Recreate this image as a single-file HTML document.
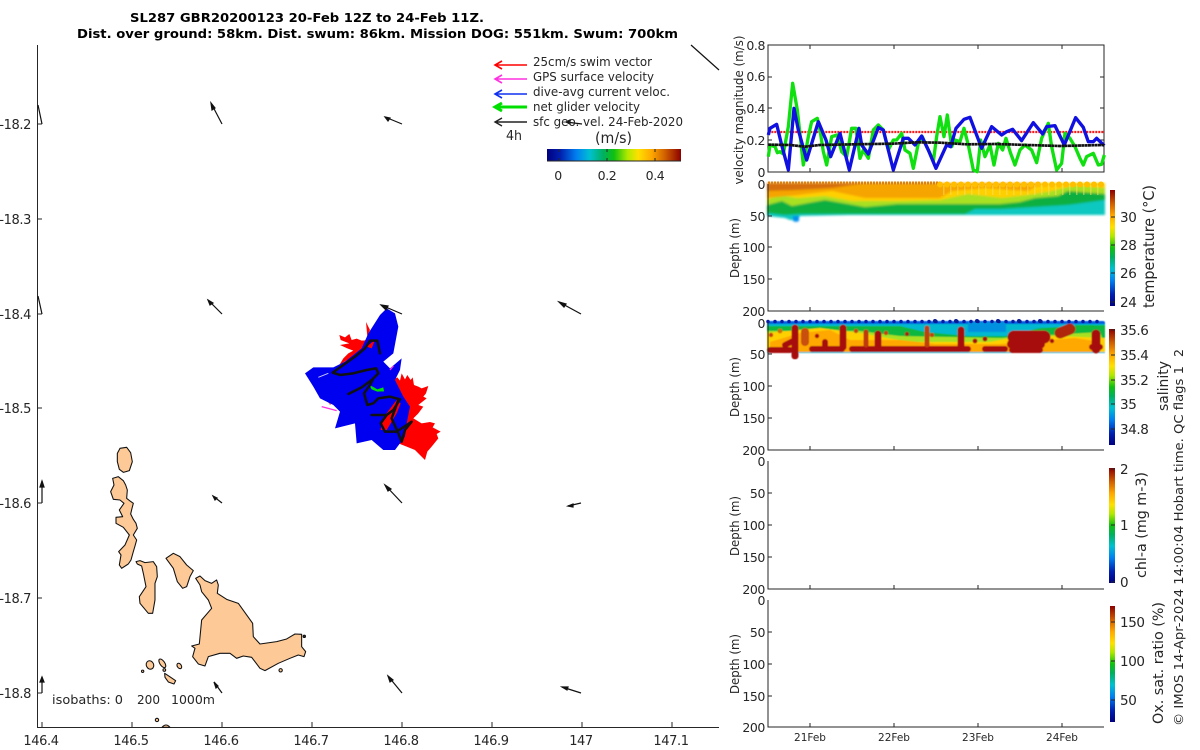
<!DOCTYPE html>
<html><head><meta charset="utf-8"><style>
html,body{margin:0;padding:0;background:#fff;width:1200px;height:750px;overflow:hidden}
svg{display:block;font-family:"DejaVu Sans","Liberation Sans",sans-serif}
text{fill:#262626}
.t{letter-spacing:-.4px}
</style></head><body>
<svg width="1200" height="750" viewBox="0 0 1200 750" xmlns="http://www.w3.org/2000/svg">
<defs>
<linearGradient id="jetV" x1="0" y1="1" x2="0" y2="0">
<stop offset="0" stop-color="#00007f"/><stop offset=".1" stop-color="#0020b0"/><stop offset=".22" stop-color="#0080f0"/><stop offset=".32" stop-color="#00c0d0"/><stop offset=".42" stop-color="#00b060"/><stop offset=".5" stop-color="#10c010"/><stop offset=".6" stop-color="#b0e800"/><stop offset=".68" stop-color="#ffe000"/><stop offset=".78" stop-color="#ffa800"/><stop offset=".88" stop-color="#d06000"/><stop offset="1" stop-color="#8b0000"/>
</linearGradient>
<linearGradient id="jetH" x1="0" y1="0" x2="1" y2="0">
<stop offset="0" stop-color="#00007f"/><stop offset=".1" stop-color="#0020b0"/><stop offset=".22" stop-color="#0080f0"/><stop offset=".32" stop-color="#00c0d0"/><stop offset=".42" stop-color="#00b060"/><stop offset=".5" stop-color="#10c010"/><stop offset=".6" stop-color="#b0e800"/><stop offset=".68" stop-color="#ffe000"/><stop offset=".78" stop-color="#ffa800"/><stop offset=".88" stop-color="#d06000"/><stop offset="1" stop-color="#8b0000"/>
</linearGradient>
<filter id="b1" x="-2%" y="-10%" width="104%" height="120%"><feGaussianBlur stdDeviation="1"/></filter>
<filter id="b2" x="-2%" y="-10%" width="104%" height="120%"><feGaussianBlur stdDeviation=".5"/></filter>
</defs>

<!-- Title -->
<text x="130" y="22" font-size="12.5" font-weight="bold" textLength="354" lengthAdjust="spacingAndGlyphs" style="fill:#000">SL287 GBR20200123 20-Feb 12Z to 24-Feb 11Z.</text>
<text x="77" y="38" font-size="12.5" font-weight="bold" textLength="601" lengthAdjust="spacingAndGlyphs" style="fill:#000">Dist. over ground: 58km. Dist. swum: 86km. Mission DOG: 551km. Swum: 700km</text>

<!-- Map axes -->
<path d="M37.5 45V727.5H719" fill="none" stroke="#262626" stroke-width="1"/>
<path d="M42 727V722M132 727V722M222 727V722M312 727V722M402 727V722M492 727V722M582 727V722M672 727V722M38 124H42M38 219H42M38 314H42M38 408H42M38 503H42M38 598H42M38 693H42" stroke="#262626" stroke-width="1" fill="none"/>
<g font-size="13" text-anchor="middle" class="t">
<text x="41" y="745">146.4</text><text x="131" y="745">146.5</text><text x="221" y="745">146.6</text><text x="311" y="745">146.7</text><text x="401" y="745">146.8</text><text x="491" y="745">146.9</text><text x="581" y="745">147</text><text x="671" y="745">147.1</text>
</g>
<g font-size="13" text-anchor="end" class="t">
<text x="31" y="129">-18.2</text><text x="31" y="224">-18.3</text><text x="31" y="319">-18.4</text><text x="31" y="413">-18.5</text><text x="31" y="508">-18.6</text><text x="31" y="603">-18.7</text><text x="31" y="698">-18.8</text>
</g>

<!-- Islands -->
<g transform="translate(30,440) scale(.3333)" fill="#fdc997" stroke="#111" stroke-width="3.2" stroke-linejoin="round">
<path d="M262 40L270 25L290 22L302 38L307 65L298 92L280 97L268 88L262 65Z"/>
<path d="M248 115L265 110L280 122L287 135L292 150L290 175L300 183L310 190L306 205L302 222L310 238L318 250L322 265L310 285L320 300L315 318L310 335L303 360L295 372L275 385L268 375L273 345L266 335L285 315L298 285L280 262L258 250L258 232L278 230L268 210L282 190L270 180L250 178L242 155L252 135Z"/>
<path d="M318 365L330 362L345 368L370 365L380 380L382 410L375 430L375 480L368 520L355 520L330 490L328 470L348 440L340 400L335 378L322 372Z"/>
<path d="M408 355L430 340L450 350L470 375L490 392L480 410L470 440L458 445L442 425L430 385Z"/>
<path d="M497 415L510 408L525 422L545 430L560 420L565 435L562 460L590 478L625 490L650 525L668 550L670 590L690 612L740 605L770 597L795 582L815 583L815 620L827 635L822 650L805 645L780 655L745 670L705 692L690 685L665 652L640 648L620 655L600 640L570 640L535 650L525 678L505 672L488 650L495 625L485 618L508 612L515 540L545 505L535 480L515 455L510 435Z"/>
<ellipse cx="360" cy="675" rx="11" ry="13" transform="rotate(-25 360 675)"/>
<ellipse cx="397" cy="670" rx="7" ry="15" transform="rotate(-35 397 670)"/>
<ellipse cx="448" cy="678" rx="6" ry="9" transform="rotate(-35 448 678)"/>
<path d="M404 700L416 708L437 722L432 732L415 726L405 712Z"/>
<circle cx="403" cy="690" r="4"/><circle cx="338" cy="694" r="3.5"/><circle cx="752" cy="691" r="5"/><circle cx="381" cy="840" r="5"/><circle cx="823" cy="589" r="3.5" fill="#333"/>
<path d="M396 862Q408 848 420 862Z"/>
</g>
<g font-size="12.5"><text x="52" y="704" textLength="71" lengthAdjust="spacingAndGlyphs">isobaths: 0</text><text x="137" y="704" textLength="23" lengthAdjust="spacingAndGlyphs">200</text><text x="171" y="704" textLength="44" lengthAdjust="spacingAndGlyphs">1000m</text></g>

<!-- Glider swath -->
<g transform="translate(290,290) scale(.3333)">
<g fill="#ff0000">
<path d="M148 135L165 142L178 132L185 150L200 146L215 152L240 150L255 150L240 175L200 195L180 205L148 225L160 205L175 190L190 182L172 175L150 165L178 160L152 150Z"/>
<path d="M228 96L240 120L232 140Z"/>
<path d="M312 268L322 262L330 272L335 250L345 268L352 255L362 270L368 262L372 285L385 290L395 295L415 288L408 310L400 320L410 325L385 345L400 350L385 370L370 385L395 400L420 396L435 400L428 412L452 425L440 432L445 445L425 470L412 485L405 510L390 495L375 480L350 470L325 460L340 400L330 330Z"/>
<path d="M110 330L130 318L135 335L120 345Z" opacity=".6"/>
</g>
<path fill="#0000f0" d="M290 55L315 70L325 110L310 190L280 215L300 235L335 205L330 240L315 270L340 320L360 350L350 400L345 440L315 480L280 480L245 450L200 460L195 400L135 415L150 365L130 345L90 325L70 290L45 250L70 232L130 232L165 215L215 175L235 130L270 75Z"/>
<path d="M85 262L115 250" stroke="#c8c8ff" stroke-width="3" fill="none"/>
<path fill="#ff0000" d="M320 330L332 340L320 370L290 420L272 420L278 385ZM230 170L255 150L245 175Z"/>
<path d="M95 350L140 362M300 240L310 228" stroke="#ff30e0" stroke-width="4" fill="none"/>
<path d="M238 285L252 292L262 298L280 292L282 304L262 305L245 298Z" fill="#00e000"/>
<path fill="none" stroke="#111" stroke-width="7.5" stroke-linejoin="round" stroke-linecap="round" d="M270 190L262 152L240 152L225 175L195 200L160 225L128 248L150 255L190 250L230 240L258 235L265 250L250 265L240 285L222 310L232 345L250 340L265 325L300 320L330 328L310 360L290 375L245 375M175 312L215 292L245 270L260 255M290 375L272 400L285 425L320 425L350 405L365 395L345 420L335 455L325 430L305 385L325 330"/>
</g>

<!-- Map arrows -->
<g stroke="#111" stroke-width="1.2" fill="#111">
<path d="M222 124L211 103" fill="none"/><path d="M211 103L215 108L212 110Z"/>
<path d="M402 124L385 117" fill="none"/><path d="M385 117L390 118L388 121Z"/>
<path d="M222 314L208 300" fill="none"/><path d="M208 300L213 303L210 305Z"/>
<path d="M402 314L381 305" fill="none"/><path d="M381 305L388 306L386 310Z"/>
<path d="M581 314L559 302" fill="none"/><path d="M559 302L566 304L564 307Z"/>
<path d="M222 503L213 496" fill="none"/><path d="M213 496L217 498L215 500Z"/>
<path d="M402 503L385 485" fill="none"/><path d="M385 485L391 489L388 491Z"/>
<path d="M581 503L568 506" fill="none"/><path d="M568 506L573 504L573 507Z"/>
<path d="M222 693L214 682" fill="none"/><path d="M214 682L218 686L216 688Z"/>
<path d="M402 693L388 676" fill="none"/><path d="M388 676L393 680L390 682Z"/>
<path d="M581 693L562 687" fill="none"/><path d="M562 687L568 687L567 690Z"/>
<path d="M42 503V481" fill="none"/><path d="M42 481L44 487H40Z"/>
<path d="M42 693V677" fill="none"/><path d="M42 677L44 682H40Z"/>
<path d="M719 70L691 45" fill="none"/>
<path d="M38 105L42 124" fill="none"/><path d="M38 296L42 314" fill="none"/>
<path d="M582 124L566 122" fill="none"/><path d="M566 122L570 120L570 124Z"/>
</g>

<!-- Legend -->
<g fill="none">
<path d="M495 65H527M502 61L495 65L502 69" stroke="#ff0000" stroke-width="1.6"/>
<path d="M495 79H527M502 75L495 79L502 83" stroke="#ff30e0" stroke-width="1.6"/>
<path d="M495 94H527M502 90L495 94L502 98" stroke="#1030f0" stroke-width="1.6"/>
<path d="M495 107H527M502 103L495 107L502 111" stroke="#00e000" stroke-width="3"/>
<path d="M495 122H527M502 118L495 122L502 126" stroke="#222" stroke-width="1.4"/>
</g>
<g font-size="12">
<text x="533" y="66" textLength="119" lengthAdjust="spacingAndGlyphs">25cm/s swim vector</text>
<text x="533" y="81" textLength="121" lengthAdjust="spacingAndGlyphs">GPS surface velocity</text>
<text x="533" y="96" textLength="137" lengthAdjust="spacingAndGlyphs">dive-avg current veloc.</text>
<text x="533" y="111" textLength="107" lengthAdjust="spacingAndGlyphs">net glider velocity</text>
<text x="533" y="126" textLength="150" lengthAdjust="spacingAndGlyphs">sfc geo. vel. 24-Feb-2020</text>
<text x="506" y="140" font-size="13" textLength="16" lengthAdjust="spacingAndGlyphs">4h</text>
<text x="595" y="143" font-size="15" textLength="37" lengthAdjust="spacingAndGlyphs">(m/s)</text>
</g>
<rect x="547" y="149" width="134" height="12" fill="url(#jetH)"/>
<path d="M547 161H681" stroke="#262626"/>
<path d="M559 149V152M607 149V152M655 149V152M559 161V158M607 161V158M655 161V158" stroke="#262626"/>
<g font-size="12.5" text-anchor="middle" class="t"><text x="558" y="180">0</text><text x="607" y="180">0.2</text><text x="655" y="180">0.4</text></g>

<!-- Velocity panel -->
<rect x="768" y="45" width="336" height="127" fill="none" stroke="#262626"/>
<path d="M768 77H772M768 108H772M768 140H772M810 172V168M894 172V168M978 172V168M1062 172V168M1100 77H1104M1100 108H1104M1100 140H1104M810 45V49M894 45V49M978 45V49M1062 45V49" stroke="#262626"/>
<g font-size="12.5" text-anchor="end" class="t"><text x="765" y="50">0.8</text><text x="765" y="81">0.6</text><text x="765" y="113">0.4</text><text x="765" y="145">0.2</text><text x="765" y="177">0</text></g>
<text transform="translate(743,110) rotate(-90)" font-size="12.5" text-anchor="middle" textLength="149" lengthAdjust="spacingAndGlyphs">velocity magnitude (m/s)</text>
<g transform="translate(720,30) scale(.3333)" fill="none" stroke-linejoin="round">
<path d="M145 306H1153" stroke="#ff1818" stroke-width="7" stroke-dasharray="6 3"/>
<polyline stroke="#10e010" stroke-width="10" points="145,380 150,345 165,350 172,368 180,365 190,372 205,290 218,160 232,240 250,405 265,320 275,275 292,265 300,300 310,365 320,405 335,320 352,315 365,365 380,380 395,295 408,295 420,385 430,360 445,385 460,300 475,285 490,300 505,360 520,330 530,330 545,310 555,360 570,370 580,415 595,340 607,320 620,350 630,370 640,395 650,320 660,260 672,320 682,255 695,350 705,330 720,335 732,295 745,345 760,420 772,425 782,330 795,380 810,345 822,405 835,340 848,360 858,325 872,370 885,405 900,360 915,345 935,360 950,398 965,325 985,280 995,350 1010,420 1025,400 1035,310 1050,325 1065,350 1080,385 1090,405 1100,380 1120,370 1135,405 1145,403 1153,375"/>
<polyline stroke="#1010e0" stroke-width="10" points="145,315 150,295 170,283 185,345 205,420 222,235 235,300 260,390 295,275 318,330 332,380 360,310 388,420 417,295 425,345 445,372 475,293 490,300 520,420 550,325 565,325 585,345 605,318 625,360 648,415 680,345 692,350 708,295 732,268 750,262 785,355 815,290 845,315 860,305 878,298 905,332 940,278 968,312 980,290 1005,287 1033,345 1067,263 1090,292 1105,335 1120,335 1130,325 1153,347"/>
<polyline stroke="#111" stroke-width="8" stroke-dasharray="9 1" points="145,344 210,345 255,350 300,345 400,343 520,341 590,337 660,338 740,343 830,342 920,345 1020,348 1153,345"/>
</g>

<!-- Temperature panel -->
<g filter="url(#b1)">
<path fill="#10c8c0" d="M767 187H1105V215L1000 215L940 215L850 215L800 216L797 220L790 220L785 218L767 216Z"/>
<path fill="#0090f0" d="M793 216H799V221L796 222L793 221Z"/>
<path fill="#10b040" d="M767 183H1105V200L1068 205L1035 207L1000 209L975 209L965 214L850 214L800 214L785 215L767 213Z"/>
<path fill="#a8e020" d="M767 205L782 201L792 206L808 203L825 200L848 204L865 207L898 204L940 204L968 204L1000 204L1020 202L1035 198L1058 196L1068 191L1105 194V183H767Z"/>
<path fill="#ffd000" d="M767 200L778 195L798 198L825 196L852 201L898 201L940 200L968 194L1002 198L1028 195L1052 191L1075 185L1105 188V183H767Z"/>
<path fill="#f6a400" d="M767 198L798 195L832 191L865 198L940 198L952 191L985 188L1028 191L1042 183H767Z"/>
<path fill="#d56e08" d="M767 191L798 190L832 188L865 183H767Z"/>
</g>
<path d="M768 183H940" stroke="#d88010" stroke-width="3" stroke-dasharray="2 1" fill="none"/>
<path d="M943 190H1104" stroke="#ffe060" stroke-width="10" stroke-dasharray="1.5 5.5" opacity=".5" fill="none"/>
<path d="M940 184.5H1105" stroke="#ffbe00" stroke-width="6" stroke-linecap="round" stroke-dasharray="0 7" fill="none"/>
<path d="M768 184V311H1104" fill="none" stroke="#262626"/>
<path d="M810 311V307M894 311V307M978 311V307M1062 311V307M768 216H772M768 247H772M768 279H772" stroke="#262626"/>
<g font-size="12.5" text-anchor="end" class="t"><text x="765" y="189">0</text><text x="765" y="221">50</text><text x="765" y="252">100</text><text x="765" y="284">150</text><text x="765" y="316">200</text></g>
<text transform="translate(739,248) rotate(-90)" font-size="12.5" text-anchor="middle" textLength="60" lengthAdjust="spacingAndGlyphs">Depth (m)</text>
<rect x="1110" y="190" width="5" height="116" fill="url(#jetV)"/>
<path d="M1115 217H1111M1115 245H1111M1115 273H1111M1115 302H1111" stroke="#262626"/>
<g font-size="13.5" class="t"><text x="1120" y="222">30</text><text x="1120" y="250">28</text><text x="1120" y="278">26</text><text x="1120" y="307">24</text></g>
<text transform="translate(1154,308) rotate(-90)" font-size="15" textLength="123" lengthAdjust="spacingAndGlyphs">temperature (°C)</text>

<!-- Salinity panel -->
<g filter="url(#b2)">
<rect x="767" y="321" width="338" height="32" rx="2" fill="#0060e0"/>
<rect x="767" y="324" width="338" height="29" fill="#00b8d0"/>
<path fill="#0090e0" d="M968 322H1006V332H968Z"/>
<path fill="#10b840" d="M767 326H900L925 332L968 336L1006 336L1040 328L1105 325V352H767Z"/>
<path fill="#a8e020" d="M767 331H860L900 336L1000 338L1100 332L1105 345V352H767Z"/>
<path fill="#ffd000" d="M767 333L820 328L860 333L910 342L990 342L1010 338L1060 336L1105 338V352H767Z"/>
<path fill="#ffa800" d="M770 342L800 333L830 330L850 340L900 340L935 344L1000 344L1075 338L1100 342V352H770Z"/>
<path fill="#10b840" d="M1075 325H1095V332H1075Z"/>
<g fill="none" stroke="#a80808" stroke-linecap="round" stroke-linejoin="round">
<path stroke-width="6" d="M770 350H790M812 349H842M852 349H968M985 349H1005M1012 350H1040M1092 347H1100"/>
<path stroke-width="7" d="M795 328V356M843 328V347M878 334V346M961 330V348"/>
<path stroke-width="6" d="M785 345L795 340M825 342V348M1036 345V350"/>
<path stroke-width="5" d="M866 332V345" stroke="#c03810"/>
<path stroke-width="8" d="M805 332V342" stroke="#c85010"/>
<path stroke-width="5" d="M927 328V345" stroke="#c04010"/>
<path stroke-width="13" d="M1014 337H1044"/>
<path stroke-width="10" d="M1012 344H1040"/>
<path stroke-width="11" d="M1060 333L1070 329" stroke="#b02810"/>
<path stroke-width="9" d="M1096 334V349"/>
</g>
<g stroke="none">
<circle cx="817" cy="336" r="2.2" fill="#a80808"/><circle cx="771" cy="335" r="2.2" fill="#c84010"/><circle cx="780" cy="331" r="2.4" fill="#d07000"/><circle cx="856" cy="331" r="2.2" fill="#c84010"/><circle cx="886" cy="333" r="2.2" fill="#c84010"/><circle cx="907" cy="334" r="2.2" fill="#a82010"/><circle cx="932" cy="335" r="2.2" fill="#c84010"/><circle cx="975" cy="341" r="2.4" fill="#a80808"/><circle cx="985" cy="339" r="2.4" fill="#a80808"/><circle cx="1052" cy="341" r="2.2" fill="#a80808"/>
</g>
</g>
<path d="M768 321.5H1103" stroke="#0a1aa8" stroke-width="3.5" stroke-linecap="round" stroke-dasharray="0 7" fill="none"/>
<path d="M935 321H1060" stroke="#0a1a90" stroke-width="4" stroke-linecap="round" stroke-dasharray="0 21" fill="none"/>
<path d="M768 322V450H1104" fill="none" stroke="#262626"/>
<path d="M810 450V446M894 450V446M978 450V446M1062 450V446M768 354H772M768 386H772M768 418H772" stroke="#262626"/>
<g font-size="12.5" text-anchor="end" class="t"><text x="765" y="328">0</text><text x="765" y="359">50</text><text x="765" y="391">100</text><text x="765" y="423">150</text><text x="765" y="455">200</text></g>
<text transform="translate(739,387) rotate(-90)" font-size="12.5" text-anchor="middle" textLength="60" lengthAdjust="spacingAndGlyphs">Depth (m)</text>
<rect x="1109" y="329" width="6" height="116" fill="url(#jetV)"/>
<path d="M1115 330H1111M1115 355H1111M1115 380H1111M1115 404H1111M1115 429H1111" stroke="#262626"/>
<g font-size="13.5" class="t"><text x="1120" y="335">35.6</text><text x="1120" y="360">35.4</text><text x="1120" y="385">35.2</text><text x="1120" y="409">35</text><text x="1120" y="434">34.8</text></g>
<text transform="translate(1168,411) rotate(-90)" font-size="14" textLength="50" lengthAdjust="spacingAndGlyphs">salinity</text>

<!-- Chl panel -->
<path d="M768 461V589H1104" fill="none" stroke="#262626"/>
<path d="M810 589V585M894 589V585M978 589V585M1062 589V585M768 493H772M768 525H772M768 557H772" stroke="#262626"/>
<g font-size="12.5" text-anchor="end" class="t"><text x="765" y="466">0</text><text x="765" y="498">50</text><text x="765" y="530">100</text><text x="765" y="562">150</text><text x="765" y="594">200</text></g>
<text transform="translate(739,526) rotate(-90)" font-size="12.5" text-anchor="middle" textLength="60" lengthAdjust="spacingAndGlyphs">Depth (m)</text>
<rect x="1109" y="468" width="6" height="115" fill="url(#jetV)"/>
<path d="M1115 469H1111M1115 525H1111M1115 582H1111" stroke="#262626"/>
<g font-size="13.5"><text x="1120" y="474">2</text><text x="1120" y="530">1</text><text x="1120" y="587">0</text></g>
<text transform="translate(1146,578) rotate(-90)" font-size="14.5" textLength="106" lengthAdjust="spacingAndGlyphs">chl-a (mg m-3)</text>

<!-- Oxygen panel -->
<path d="M768 600V727H1104" fill="none" stroke="#262626"/>
<path d="M810 727V723M894 727V723M978 727V723M1062 727V723M768 632H772M768 664H772M768 696H772" stroke="#262626"/>
<g font-size="12.5" text-anchor="end" class="t"><text x="765" y="605">0</text><text x="765" y="637">50</text><text x="765" y="669">100</text><text x="765" y="701">150</text><text x="765" y="732">200</text></g>
<text transform="translate(739,664) rotate(-90)" font-size="12.5" text-anchor="middle" textLength="60" lengthAdjust="spacingAndGlyphs">Depth (m)</text>
<rect x="1110" y="606" width="5" height="116" fill="url(#jetV)"/>
<path d="M1115 622H1111M1115 661H1111M1115 700H1111" stroke="#262626"/>
<g font-size="13.5" class="t"><text x="1120" y="627">150</text><text x="1120" y="666">100</text><text x="1120" y="705">50</text></g>
<text transform="translate(1163,724) rotate(-90)" font-size="14.5" textLength="122" lengthAdjust="spacingAndGlyphs">Ox. sat. ratio (%)</text>

<g font-size="10.5" text-anchor="middle"><text x="810" y="741">21Feb</text><text x="894" y="741">22Feb</text><text x="978" y="741">23Feb</text><text x="1062" y="741">24Feb</text></g>
<text transform="translate(1183,726) rotate(-90)" font-size="12.5" textLength="360" lengthAdjust="spacingAndGlyphs">© IMOS 14-Apr-2024 14:00:04 Hobart time. QC flags 1</text>
<text transform="translate(1183,357) rotate(-90)" font-size="12.5">2</text>
</svg>
</body></html>
